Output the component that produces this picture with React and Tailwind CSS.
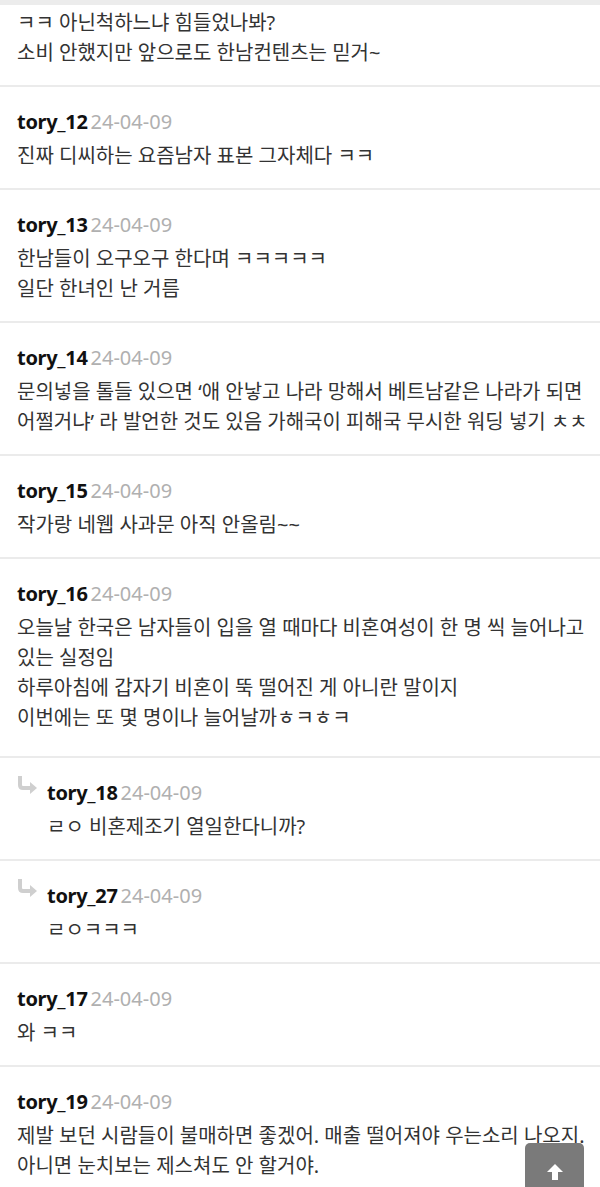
import React from "react";

const comments = [
  { user: "tory_12", lines: ["진짜 디씨하는 요즘남자 표본 그자체다 ㅋㅋ"] },
  { user: "tory_13", lines: ["한남들이 오구오구 한다며 ㅋㅋㅋㅋㅋ", "일단 한녀인 난 거름"] },
  {
    user: "tory_14",
    lines: [
      "문의넣을 톨들 있으면 ‘애 안낳고 나라 망해서 베트남같은 나라가 되면 어쩔거냐’ 라 발언한 것도 있음 가해국이 피해국 무시한 워딩 넣기 ㅊㅊ",
    ],
  },
  { user: "tory_15", lines: ["작가랑 네웹 사과문 아직 안올림~~"] },
  {
    user: "tory_16",
    lines: [
      "오늘날 한국은 남자들이 입을 열 때마다 비혼여성이 한 명 씩 늘어나고 있는 실정임",
      "하루아침에 갑자기 비혼이 뚝 떨어진 게 아니란 말이지",
      "이번에는 또 몇 명이나 늘어날까ㅎㅋㅎㅋ",
    ],
    extra: true,
  },
  { user: "tory_18", reply: true, lines: ["ㄹㅇ 비혼제조기 열일한다니까?"] },
  { user: "tory_27", reply: true, lines: ["ㄹㅇㅋㅋㅋ"] },
  { user: "tory_17", lines: ["와 ㅋㅋ"] },
  {
    user: "tory_19",
    lines: [
      "제발 보던 시람들이 불매하면 좋겠어. 매출 떨어져야 우는소리 나오지.",
      "아니면 눈치보는 제스쳐도 안 할거야.",
    ],
    last: true,
  },
];

const font = { fontFamily: '"Noto Sans", "Noto Sans CJK KR", sans-serif' };

function ReplyArrow() {
  return (
    <svg width="22" height="20" viewBox="0 0 22 20" className="shrink-0">
      <path d="M3 0 V9 Q3 12 6 12 H14" fill="none" stroke="#cfcfcf" strokeWidth="4" />
      <path d="M13 6 L20 12 L13 18 Z" fill="#cfcfcf" />
    </svg>
  );
}

function Comment({ c }) {
  return (
    <div
      className={`${c.last ? "" : "border-b-2 border-[#ebebeb]"} pt-[16px] ${c.extra ? "pb-[23px]" : "pb-[17px]"} pl-[17px] pr-[12px]`}
    >
      <div className="flex items-center h-[38px]">
        {c.reply && (
          <div className="w-[30px] flex items-start h-full pt-[2px]">
            <ReplyArrow />
          </div>
        )}
        <span className="text-[20px] font-bold text-[#111] tracking-[-0.3px]">{c.user}</span>
        <span className="text-[20px] text-[#b0b0b0] ml-[3px]">24-04-09</span>
      </div>
      <div className={`${c.reply ? "pl-[30px]" : ""} text-[20px] leading-[30px] text-[#333]`}>
        {c.lines.map((l, i) => (
          <div key={i}>{l}</div>
        ))}
      </div>
    </div>
  );
}

export default function App() {
  return (
    <div className="w-[600px] h-[1187px] overflow-hidden bg-white relative" style={font}>
      <div className="h-[5px] bg-[#ececec]" />
      <div className="border-b-2 border-[#ebebeb] pt-[3px] pb-[17px] px-[17px] text-[20px] leading-[30px] text-[#333]">
        <div>ㅋㅋ 아닌척하느냐 힘들었나봐?</div>
        <div>소비 안했지만 앞으로도 한남컨텐츠는 믿거~</div>
      </div>
      {comments.map((c) => (
        <Comment key={c.user} c={c} />
      ))}
      <button className="absolute left-[525px] top-[1143px] w-[59px] h-[60px] bg-[#7a7a7a] rounded-[5px] flex justify-center pt-[20px]">
        <svg width="18" height="18" viewBox="0 0 18 18">
          <path d="M9 1 L17 9 H12 V17 H6 V9 H1 Z" fill="#fff" />
        </svg>
      </button>
    </div>
  );
}
